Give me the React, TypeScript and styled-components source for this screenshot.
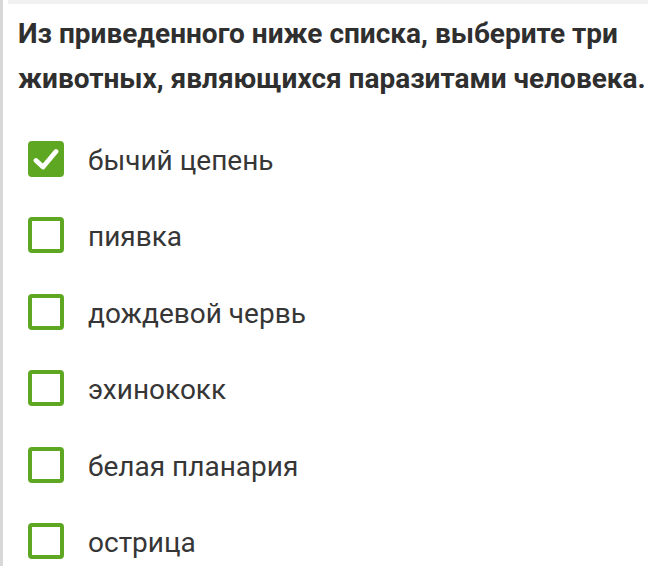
import React from 'react'
import styled, { createGlobalStyle } from 'styled-components'

const options = [
  { label: 'бычий цепень', checked: true },
  { label: 'пиявка', checked: false },
  { label: 'дождевой червь', checked: false },
  { label: 'эхинококк', checked: false },
  { label: 'белая планария', checked: false },
  { label: 'острица', checked: false },
]

const green = '#5ea722'

const GlobalStyle = createGlobalStyle`
  html, body {
    margin: 0;
    padding: 0;
    background: #ffffff;
  }
  body {
    font-family: Roboto, 'Noto Sans', sans-serif;
    overflow: hidden;
  }
`

const Check = ({ checked }: { checked: boolean }) => (
  <Box $checked={checked}>
    {checked && (
      <svg width="26" height="22" viewBox="0 0 26 22">
        <path
          d="M3 12.5 L10 19 L23 3.5"
          fill="none"
          stroke="#ffffff"
          strokeWidth="4.8"
          strokeLinecap="round"
          strokeLinejoin="round"
        />
      </svg>
    )}
  </Box>
)

export default function App() {
  return (
    <Page>
      <GlobalStyle />
      <TopStrip />
      <Content>
        <Question>
          Из приведенного ниже списка, выберите три животных, являющихся
          паразитами человека.
        </Question>
        <OptionList>
          {options.map((o) => (
            <Option key={o.label}>
              <Check checked={o.checked} />
              <OptionLabel>{o.label}</OptionLabel>
            </Option>
          ))}
        </OptionList>
      </Content>
    </Page>
  )
}

const Page = styled.div`
  width: 648px;
  height: 566px;
  border-left: 3px solid #d8d8d8;
  box-sizing: border-box;
  background: #ffffff;
  overflow: hidden;
`

const TopStrip = styled.div`
  height: 4px;
  margin-left: 5px;
  background: #f1f1f1;
`

const Content = styled.div`
  padding: 7px 0 0 15px;
`

const Question = styled.p`
  margin: 0;
  width: 628px;
  font-size: 28px;
  line-height: 45px;
  font-weight: 700;
  color: #2f2f2f;
`

const OptionList = styled.div`
  display: flex;
  flex-direction: column;
  gap: 40.4px;
  margin-top: 40px;
  padding-left: 10px;
`

const Option = styled.div`
  display: flex;
  align-items: center;
  gap: 24px;
  height: 36px;
`

const Box = styled.div<{ $checked: boolean }>`
  width: 36px;
  height: 36px;
  box-sizing: border-box;
  border-radius: 4px;
  border: 4px solid ${green};
  background: ${(p) => (p.$checked ? green : '#ffffff')};
  display: flex;
  align-items: center;
  justify-content: center;
  flex-shrink: 0;
`

const OptionLabel = styled.span`
  font-size: 28px;
  color: #363636;
  line-height: 36px;
  padding-top: 4px;
`
